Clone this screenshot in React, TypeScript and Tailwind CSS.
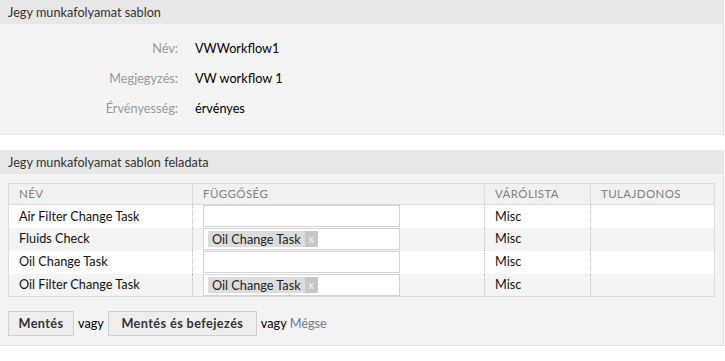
import React from "react";

type Task = { name: string; deps: string[]; queue: string; owner: string };

const tasks: Task[] = [
  { name: "Air Filter Change Task", deps: [], queue: "Misc", owner: "" },
  { name: "Fluids Check", deps: ["Oil Change Task"], queue: "Misc", owner: "" },
  { name: "Oil Change Task", deps: [], queue: "Misc", owner: "" },
  { name: "Oil Filter Change Task", deps: ["Oil Change Task"], queue: "Misc", owner: "" },
];

const fields = [
  { label: "Név:", value: "VWWorkflow1" },
  { label: "Megjegyzés:", value: "VW workflow 1" },
  { label: "Érvényesség:", value: "érvényes" },
];

const font = { fontFamily: "Lato, 'Liberation Sans', sans-serif" };

const App: React.FC = () => {
  return (
    <div className="w-[725px] h-[361px] bg-white text-[12.7px] text-[#111]" style={font}>
      {/* template details */}
      <div className="w-[724px] bg-[#f4f4f4] border-r border-b border-[#e2e2e2]">
        <div className="h-[24px] bg-[#e7e7e7] px-2 leading-[24px] text-[#333]">
          Jegy munkafolyamat sablon
        </div>
        <div className="py-[10px]">
          {fields.map((f) => (
            <div key={f.label} className="flex h-[30px] items-center">
              <div className="w-[178px] text-right text-[#999]">{f.label}</div>
              <div className="ml-[17px] text-black">{f.value}</div>
            </div>
          ))}
        </div>
      </div>

      {/* tasks */}
      <div className="mt-[15px] w-[724px] bg-[#f4f4f4] border-r border-b border-[#e2e2e2]">
        <div className="h-[24px] bg-[#e7e7e7] px-2 leading-[24px] text-[#333]">
          Jegy munkafolyamat sablon feladata
        </div>
        <div className="px-2 pt-[9px] pb-[9px]">
          <table className="w-[706px] border-collapse border border-[#dcdcdc] table-fixed">
            <colgroup>
              <col className="w-[184px]" />
              <col className="w-[292px]" />
              <col className="w-[106px]" />
              <col className="w-[124px]" />
            </colgroup>
            <thead>
              <tr className="h-[21px] bg-[#f1f1f1]">
                {["Név", "Függőség", "Várólista", "Tulajdonos"].map((h) => (
                  <th
                    key={h}
                    className="border border-[#dcdcdc] px-[10px] text-left font-normal uppercase text-[11.5px] tracking-[0.4px] text-[#808080]"
                  >
                    {h}
                  </th>
                ))}
              </tr>
            </thead>
            <tbody>
              {tasks.map((t, i) => (
                <tr key={t.name} className={`h-[23px] ${i % 2 === 0 ? "bg-white" : "bg-[#f4f4f4]"}`}>
                  <td className="px-[10px] border-r border-dotted border-[#bdbdbd]">{t.name}</td>
                  <td className="px-[10px] border-r border-dotted border-[#bdbdbd]">
                    <div className="flex h-[22px] w-[197px] items-center border border-[#d3d3d3] bg-white px-[4px]">
                      {t.deps.map((d) => (
                        <span key={d} className="flex h-[16px] items-center bg-[#dcdcdc] text-[#222]">
                          <span className="px-[4px] leading-[16px]">{d}</span>
                          <span className="flex h-[16px] w-[13px] items-center justify-center bg-[#c6c6c6] text-[11px] text-[#f2f2f2]">
                            x
                          </span>
                        </span>
                      ))}
                    </div>
                  </td>
                  <td className="px-[10px] border-r border-dotted border-[#bdbdbd]">{t.queue}</td>
                  <td className="px-[10px]">{t.owner}</td>
                </tr>
              ))}
            </tbody>
          </table>

          <div className="mt-[14px] flex items-center">
            <button className="h-[25px] w-[66px] border border-[#cfcfcf] bg-[#eeeeee] font-bold tracking-[0.4px] text-[#333]">
              Mentés
            </button>
            <span className="mx-[4px] text-black">vagy</span>
            <button className="h-[25px] w-[149px] border border-[#cfcfcf] bg-[#eeeeee] font-bold tracking-[0.4px] text-[#333]">
              Mentés és befejezés
            </button>
            <span className="ml-[4px] text-black">vagy</span>
            <span className="ml-[3px] text-[#687c91]">Mégse</span>
          </div>
        </div>
      </div>
    </div>
  );
};

export default App;
